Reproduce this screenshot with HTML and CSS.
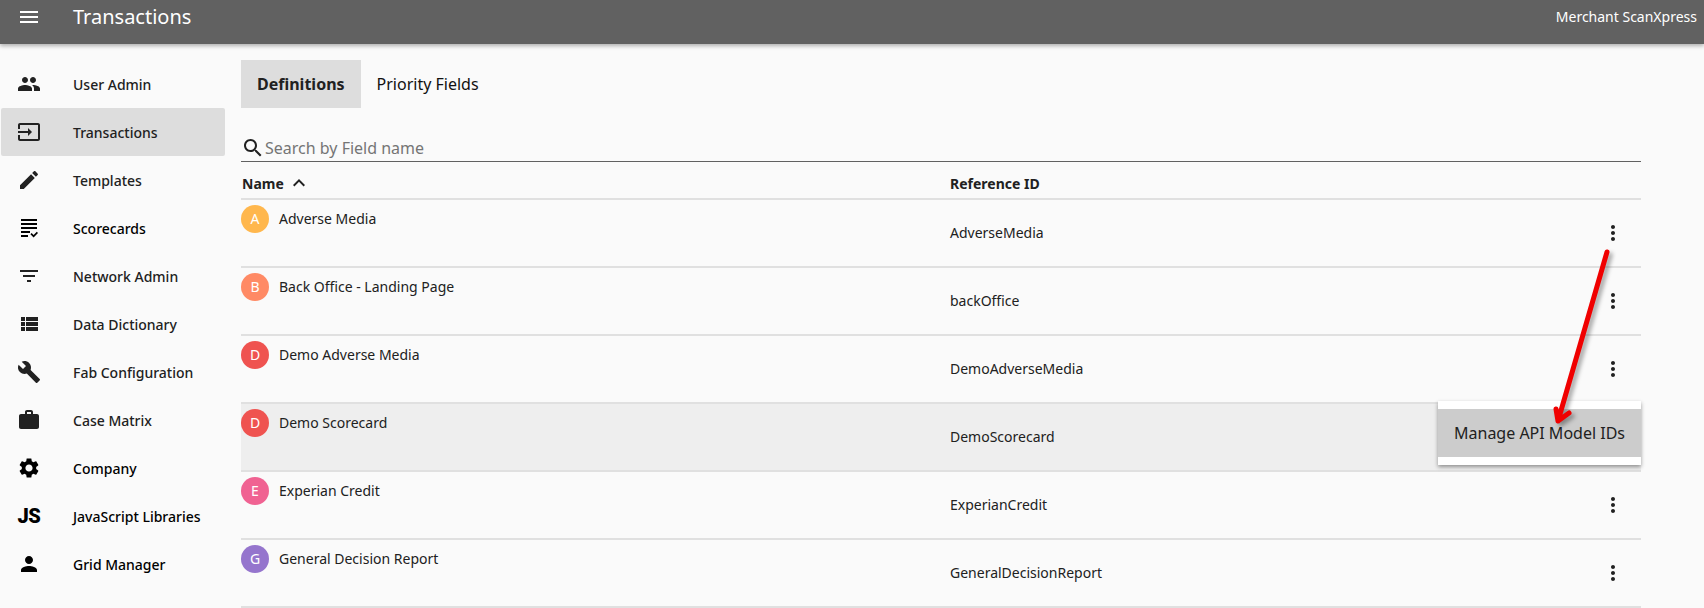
FILE: index.html
```html
<!DOCTYPE html>
<html lang="en">
<head>
<meta charset="utf-8">
<title>Transactions</title>
<link rel="stylesheet" href="styles.css">
</head>
<body>
<header class="topbar">
  <svg class="icon bar-icon" viewBox="0 0 24 24"><path d="M3 18h18v-2H3v2zm0-5h18v-2H3v2zm0-7v2h18V6H3z"/></svg>
  <h1 class="bar-title">Transactions</h1>
  <span class="bar-brand">Merchant ScanXpress</span>
</header>
<div class="layout">
  <nav class="sidebar">
    <a class="nav-item"><svg class="icon" viewBox="0 0 24 24"><path d="M16 11c1.66 0 2.99-1.34 2.99-3S17.66 5 16 5c-1.66 0-3 1.34-3 3s1.34 3 3 3zm-8 0c1.66 0 2.99-1.34 2.99-3S9.66 5 8 5C6.34 5 5 6.34 5 8s1.34 3 3 3zm0 2c-2.33 0-7 1.17-7 3.5V19h14v-2.5c0-2.33-4.67-3.5-7-3.5zm8 0c-.29 0-.62.02-.97.05 1.16.84 1.97 1.97 1.97 3.45V19h6v-2.5c0-2.33-4.67-3.5-7-3.5z"/></svg><span>User Admin</span></a>
    <a class="nav-item active"><svg class="icon" viewBox="0 0 24 24"><path d="M21 3.01H3c-1.1 0-2 .9-2 2V9h2V4.99h18v14.03H3V15H1v4.01c0 1.1.9 1.98 2 1.98h18c1.1 0 2-.88 2-1.98v-14c0-1.11-.9-2-2-2zM11 16l4-4-4-4v3H1v2h10v3z"/></svg><span>Transactions</span></a>
    <a class="nav-item"><svg class="icon" viewBox="0 0 24 24"><path d="M3 17.25V21h3.75L17.81 9.94l-3.75-3.75L3 17.25zM20.71 7.04c.39-.39.39-1.02 0-1.41l-2.34-2.34c-.39-.39-1.02-.39-1.41 0l-1.83 1.83 3.75 3.75 1.83-1.83z"/></svg><span>Templates</span></a>
    <a class="nav-item black"><svg class="icon" viewBox="0 0 24 24"><path d="M4 3h16v2H4zM4 7h16v2H4zM4 11h16v2H4zM4 15h9v2H4zM4 19h7v2H4zM13.4 18.2l1.2-1.2 2 2 3.2-3.2 1.2 1.2-4.4 4.4z"/></svg><span>Scorecards</span></a>
    <a class="nav-item"><svg class="icon" viewBox="0 0 24 24"><path d="M10 18h4v-2h-4v2zM3 6v2h18V6H3zm3 7h12v-2H6v2z"/></svg><span>Network Admin</span></a>
    <a class="nav-item"><svg class="icon" viewBox="0 0 24 24"><path d="M4 14h4v-4H4v4zm0 5h4v-4H4v4zM4 9h4V5H4v4zm5 5h12v-4H9v4zm0 5h12v-4H9v4zM9 5v4h12V5H9z"/></svg><span>Data Dictionary</span></a>
    <a class="nav-item"><svg class="icon" viewBox="0 0 24 24"><path d="M22.7 19l-9.1-9.1c.9-2.3.4-5-1.5-6.9-2-2-5-2.4-7.4-1.3L9 6 6 9 1.6 4.7C.4 7.1.9 10.1 2.9 12.1c1.9 1.9 4.6 2.4 6.9 1.5l9.1 9.1c.4.4 1 .4 1.4 0l2.3-2.3c.5-.4.5-1.1.1-1.4z"/></svg><span>Fab Configuration</span></a>
    <a class="nav-item"><svg class="icon" viewBox="0 0 24 24"><path d="M20 6h-4V4c0-1.11-.89-2-2-2h-4c-1.11 0-2 .89-2 2v2H4c-1.11 0-1.99.89-1.99 2L2 19c0 1.11.89 2 2 2h16c1.11 0 2-.89 2-2V8c0-1.11-.89-2-2-2zm-6 0h-4V4h4v2z"/></svg><span>Case Matrix</span></a>
    <a class="nav-item black"><svg class="icon" viewBox="0 0 24 24"><path d="M19.14 12.94c.04-.3.06-.61.06-.94 0-.32-.02-.64-.07-.94l2.03-1.58c.18-.14.23-.41.12-.61l-1.92-3.32c-.12-.22-.37-.29-.59-.22l-2.39.96c-.5-.38-1.03-.7-1.62-.94l-.36-2.54c-.04-.24-.24-.41-.48-.41h-3.84c-.24 0-.43.17-.47.41l-.36 2.54c-.59.24-1.13.57-1.62.94l-2.39-.96c-.22-.08-.47 0-.59.22L2.74 8.87c-.12.21-.08.47.12.61l2.03 1.58c-.05.3-.09.63-.09.94s.02.64.07.94l-2.03 1.58c-.18.14-.23.41-.12.61l1.92 3.32c.12.22.37.29.59.22l2.39-.96c.5.38 1.03.7 1.62.94l.36 2.54c.05.24.24.41.48.41h3.84c.24 0 .44-.17.47-.41l.36-2.54c.59-.24 1.13-.56 1.62-.94l2.39.96c.22.08.47 0 .59-.22l1.92-3.32c.12-.22.07-.47-.12-.61l-2.01-1.58zM12 15.6c-1.98 0-3.6-1.62-3.6-3.6s1.62-3.6 3.6-3.6 3.6 1.62 3.6 3.6-1.62 3.6-3.6 3.6z"/></svg><span>Company</span></a>
    <a class="nav-item black"><b class="js-glyph">JS</b><span>JavaScript Libraries</span></a>
    <a class="nav-item black"><svg class="icon" viewBox="0 0 24 24"><path d="M12 12c2.21 0 4-1.79 4-4s-1.79-4-4-4-4 1.79-4 4 1.79 4 4 4zm0 2c-2.67 0-8 1.34-8 4v2h16v-2c0-2.66-5.33-4-8-4z"/></svg><span>Grid Manager</span></a>
  </nav>
  <main class="content">
    <div class="tabs">
      <div class="tab active">Definitions</div>
      <div class="tab plain">Priority Fields</div>
    </div>
    <div class="search">
      <svg class="search-icon" viewBox="0 0 24 24"><path d="M15.5 14h-.79l-.28-.27C15.41 12.59 16 11.11 16 9.5 16 5.91 13.09 3 9.5 3S3 5.91 3 9.5 5.91 16 9.5 16c1.61 0 3.09-.59 4.23-1.57l.27.28v.79l5 4.99L20.49 19l-4.99-5zm-6 0C7.01 14 5 11.99 5 9.5S7.01 5 9.5 5 14 7.01 14 9.5 11.99 14 9.5 14z"/></svg>
      <span>Search by Field name</span>
    </div>
    <div class="table-head">
      <div class="head-name">Name<svg class="sort-icon" viewBox="0 0 24 24"><path d="M12 8l-6 6 1.41 1.41L12 10.83l4.59 4.58L18 14z"/></svg></div>
      <div>Reference ID</div>
    </div>
    <div class="row">
      <div class="cell-name"><span class="avatar c-a">A</span><span>Adverse Media</span></div>
      <div class="cell-ref">AdverseMedia</div>
      <svg class="more" viewBox="0 0 24 24"><path d="M12 8c1.1 0 2-.9 2-2s-.9-2-2-2-2 .9-2 2 .9 2 2 2zm0 2c-1.1 0-2 .9-2 2s.9 2 2 2 2-.9 2-2-.9-2-2-2zm0 6c-1.1 0-2 .9-2 2s.9 2 2 2 2-.9 2-2-.9-2-2-2z"/></svg>
    </div>
    <div class="row">
      <div class="cell-name"><span class="avatar c-b">B</span><span>Back Office - Landing Page</span></div>
      <div class="cell-ref">backOffice</div>
      <svg class="more" viewBox="0 0 24 24"><path d="M12 8c1.1 0 2-.9 2-2s-.9-2-2-2-2 .9-2 2 .9 2 2 2zm0 2c-1.1 0-2 .9-2 2s.9 2 2 2 2-.9 2-2-.9-2-2-2zm0 6c-1.1 0-2 .9-2 2s.9 2 2 2 2-.9 2-2-.9-2-2-2z"/></svg>
    </div>
    <div class="row">
      <div class="cell-name"><span class="avatar c-d">D</span><span>Demo Adverse Media</span></div>
      <div class="cell-ref">DemoAdverseMedia</div>
      <svg class="more" viewBox="0 0 24 24"><path d="M12 8c1.1 0 2-.9 2-2s-.9-2-2-2-2 .9-2 2 .9 2 2 2zm0 2c-1.1 0-2 .9-2 2s.9 2 2 2 2-.9 2-2-.9-2-2-2zm0 6c-1.1 0-2 .9-2 2s.9 2 2 2 2-.9 2-2-.9-2-2-2z"/></svg>
    </div>
    <div class="row hovered">
      <div class="cell-name"><span class="avatar c-d">D</span><span>Demo Scorecard</span></div>
      <div class="cell-ref">DemoScorecard</div>
      <div class="menu"><div class="menu-item">Manage API Model IDs</div></div>
    </div>
    <div class="row">
      <div class="cell-name"><span class="avatar c-e">E</span><span>Experian Credit</span></div>
      <div class="cell-ref">ExperianCredit</div>
      <svg class="more" viewBox="0 0 24 24"><path d="M12 8c1.1 0 2-.9 2-2s-.9-2-2-2-2 .9-2 2 .9 2 2 2zm0 2c-1.1 0-2 .9-2 2s.9 2 2 2 2-.9 2-2-.9-2-2-2zm0 6c-1.1 0-2 .9-2 2s.9 2 2 2 2-.9 2-2-.9-2-2-2z"/></svg>
    </div>
    <div class="row">
      <div class="cell-name"><span class="avatar c-g">G</span><span>General Decision Report</span></div>
      <div class="cell-ref">GeneralDecisionReport</div>
      <svg class="more" viewBox="0 0 24 24"><path d="M12 8c1.1 0 2-.9 2-2s-.9-2-2-2-2 .9-2 2 .9 2 2 2zm0 2c-1.1 0-2 .9-2 2s.9 2 2 2 2-.9 2-2-.9-2-2-2zm0 6c-1.1 0-2 .9-2 2s.9 2 2 2 2-.9 2-2-.9-2-2-2z"/></svg>
    </div>
  </main>
</div>
<svg class="annotation" viewBox="0 0 1704 608">
  <path class="arrow-line" d="M1607 252 L1558 421 M1556 409 L1558 421 L1569 413"/>
</svg>
</body>
</html>
```
FILE: styles.css
```css
* { box-sizing: border-box; }
html, body { height: 100%; }
body {
  margin: 0;
  overflow: hidden;
  background: #fafafa;
  color: rgba(0, 0, 0, 0.87);
  font-family: "Noto Sans", sans-serif;
  font-size: 14px;
  position: relative;
}
.icon { width: 24px; height: 24px; flex: none; fill: currentColor; }
.topbar {
  height: 44px;
  background: #616161;
  color: #fff;
  display: flex;
  align-items: flex-start;
  padding: 5px 7px 0 17px;
  box-shadow: 0 2px 4px rgba(0, 0, 0, 0.3);
  position: relative;
  z-index: 2;
}
.bar-icon { margin-right: 32px; }
.bar-title { margin: 0; font-size: 20px; font-weight: 400; line-height: 24px; }
.bar-brand { margin-left: auto; font-size: 14px; line-height: 24px; }
.layout { display: flex; }
.sidebar { width: 241px; flex: none; padding: 16px 16px 0 1px; }
.nav-item {
  height: 48px;
  display: flex;
  align-items: center;
  padding-left: 16px;
  gap: 32px;
  border-radius: 2px;
  font-weight: 500;
  color: #212121;
}
.nav-item.black { color: #000; }
.nav-item.active { background: #dddddd; }
.js-glyph { width: 24px; flex: none; text-align: center; font-family: Roboto, sans-serif; font-size: 20px; letter-spacing: -0.5px; font-weight: 900; line-height: 24px; }
.content { width: 1400px; flex: none; padding-top: 16px; }
.tabs { display: flex; height: 48px; }
.tab { padding: 0 16px; display: flex; align-items: center; font-size: 16px; }
.tab.active { background: #dddddd; font-weight: 700; color: #212121; }
.tab.plain { color: #111; }
.search {
  margin-top: 26px;
  height: 28px;
  border-bottom: 1px solid #616161;
  display: flex;
  align-items: center;
  font-size: 16px;
  color: #757575;
}
.search-icon { width: 24px; height: 24px; fill: #212121; flex: none; }
.table-head {
  height: 38px;
  display: grid;
  grid-template-columns: 708px 1fr;
  align-items: center;
  border-bottom: 2px solid #e0e0e0;
  font-weight: 700;
  color: #212121;
  padding: 6px 0 0 1px;
}
.head-name { display: flex; align-items: center; gap: 3px; }
.sort-icon { width: 24px; height: 24px; fill: #212121; }
.row {
  height: 68px;
  display: grid;
  grid-template-columns: 709px 1fr 52px;
  align-items: center;
  border-bottom: 2px solid #e0e0e0;
  position: relative;
  color: #212121;
  padding-bottom: 1px;
}
.row.hovered { background: #eeeeee; }
.cell-name { display: flex; align-items: flex-start; gap: 10px; align-self: start; padding-top: 5px; line-height: 28px; }
.avatar {
  width: 28px;
  height: 28px;
  border-radius: 50%;
  color: #fff;
  display: flex;
  align-items: center;
  justify-content: center;
  flex: none;
}
.c-a { background: #ffb74d; }
.c-b { background: #ff8a65; }
.c-d { background: #ef5350; }
.c-e { background: #f06292; }
.c-g { background: #9575cd; }
.more { width: 24px; height: 24px; fill: #212121; justify-self: start; margin-left: 12px; }
.menu {
  position: absolute;
  right: 0;
  top: -3px;
  width: 203px;
  padding: 8px 0;
  background: #fff;
  box-shadow: 0 2px 4px rgba(0, 0, 0, 0.4);
  z-index: 3;
}
.menu-item {
  height: 48px;
  padding-left: 16px;
  display: flex;
  align-items: center;
  background: #cccccc;
  font-size: 16px;
}
.annotation { position: absolute; left: 0; top: 0; width: 1704px; height: 608px; pointer-events: none; z-index: 5; }
.arrow-line { fill: none; stroke: #f00000; stroke-width: 5; stroke-linecap: round; stroke-linejoin: round; filter: drop-shadow(3px 3px 2px rgba(0, 0, 0, 0.35)); }
```
